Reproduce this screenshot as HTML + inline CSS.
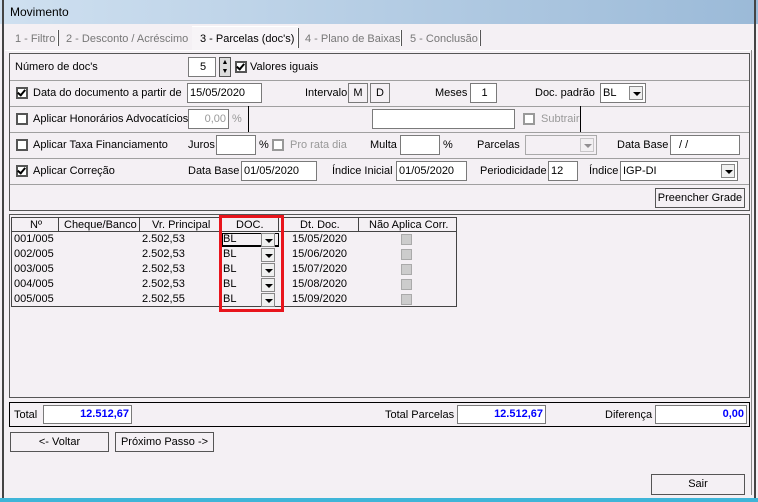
<!DOCTYPE html>
<html><head><meta charset="utf-8"><style>
*{box-sizing:border-box;margin:0;padding:0}
body{width:758px;height:502px;background:#f4f0f4;font-family:"Liberation Sans",sans-serif;font-size:11px;color:#000;position:relative;overflow:hidden}
.a{position:absolute;white-space:nowrap}
.t{position:absolute;white-space:nowrap;line-height:13px}
.in{position:absolute;background:#fff;border:1px solid #7a7a7a;height:20px;line-height:18px;padding-left:2px}
.cb{position:absolute;width:12px;height:12px;border:2px solid #555;background:#fff}
.cb.on::after{content:"";position:absolute;left:1px;top:-1px;width:3px;height:6px;border:solid #000;border-width:0 2px 2px 0;transform:rotate(40deg)}
.cb.dis{border-color:#999}
.hl{position:absolute;height:1px;background:#a0a0a0}
.btn{position:absolute;border:1px solid #555;background:#f4f0f4;text-align:center;line-height:18px}
.dd{position:absolute;width:14px;height:14px;border:1px solid #888;background:#f0f0f0}
.dd::after{content:"";position:absolute;left:3px;top:5px;border:4px solid transparent;border-top:4px solid #000;border-bottom:0}
.g{color:#999}
.gr{position:absolute;left:11px;width:446px;height:15px;line-height:15px}
.gr span{position:absolute}
.tot{position:absolute;background:#fff;border:1px solid #7a7a7a;height:19px;line-height:17px;text-align:right;padding-right:2px;color:#00f;font-weight:bold}
</style></head><body>
<div class="a" style="left:0;top:0;width:758px;height:24px;background:linear-gradient(90deg,#cfe0f0,#9bbad8)"></div>
<div class="a" style="left:2px;top:0;width:2px;height:502px;background:#444"></div>
<div class="a" style="left:754px;top:0;width:2px;height:502px;background:#444"></div>
<div class="a" style="left:0;top:498px;width:758px;height:4px;background:#3fb5d8"></div>
<div class="t" style="left:10px;top:6px;font-size:12px">Movimento</div>
<div class="t g" style="left:15px;top:33px;color:#777">1 - Filtro</div>
<div class="a" style="left:57px;top:30px;width:2px;height:16px;border-left:1px solid #fff;border-right:1px solid #555"></div>
<div class="t" style="left:66px;top:33px;color:#777">2 - Desconto / Acréscimo</div>
<div class="a" style="left:192px;top:26px;width:106px;height:24px;background:#f7f4f7;border-top:1px solid #fff"></div>
<div class="t" style="left:200px;top:33px">3 - Parcelas (doc's)</div>
<div class="a" style="left:297px;top:28px;width:2px;height:20px;border-left:1px solid #fff;border-right:1px solid #555"></div>
<div class="t" style="left:305px;top:33px;color:#777">4 - Plano de Baixas</div>
<div class="a" style="left:400px;top:30px;width:2px;height:16px;border-left:1px solid #fff;border-right:1px solid #555"></div>
<div class="t" style="left:410px;top:33px;color:#777">5 - Conclusão</div>
<div class="a" style="left:479px;top:30px;width:2px;height:16px;border-left:1px solid #fff;border-right:1px solid #555"></div>
<div class="a" style="left:5px;top:50px;width:748px;height:1px;background:#fff"></div>
<div class="a" style="left:751px;top:50px;width:2px;height:445px;border-left:1px solid #888"></div>

<div class="a" style="left:9px;top:53px;width:741px;height:158px;border:1px solid #555"></div>
<div class="hl" style="left:10px;top:80px;width:739px"></div>
<div class="hl" style="left:10px;top:106px;width:739px"></div>
<div class="hl" style="left:10px;top:132px;width:739px"></div>
<div class="hl" style="left:10px;top:158px;width:739px"></div>
<div class="hl" style="left:10px;top:184px;width:739px"></div>

<div class="t" style="left:15px;top:61px">Número de doc's</div>
<div class="in" style="left:188px;top:57px;width:28px;text-align:center">5</div>
<div class="a" style="left:219px;top:57px;width:12px;height:20px;border:1px solid #555;background:#ddd;font-size:7px;line-height:9px;text-align:center">▲<br>▼</div>
<div class="cb on" style="left:235px;top:61px"></div>
<div class="t" style="left:250px;top:61px">Valores iguais</div>

<div class="cb on" style="left:16px;top:87px"></div>
<div class="t" style="left:33px;top:87px">Data do documento a partir de</div>
<div class="in" style="left:187px;top:83px;width:75px">15/05/2020</div>
<div class="t" style="left:305px;top:87px">Intervalo</div>
<div class="in" style="left:348px;top:83px;width:20px;text-align:center;padding:0;background:#f4f0f4">M</div>
<div class="in" style="left:370px;top:83px;width:20px;text-align:center;padding:0;background:#f4f0f4">D</div>
<div class="t" style="left:435px;top:87px">Meses</div>
<div class="in" style="left:470px;top:83px;width:27px;text-align:center">1</div>
<div class="t" style="left:535px;top:87px">Doc. padrão</div>
<div class="in" style="left:600px;top:83px;width:46px">BL</div>
<div class="dd" style="left:629px;top:86px"></div>

<div class="cb" style="left:16px;top:113px"></div>
<div class="t" style="left:33px;top:113px">Aplicar Honorários Advocatícios</div>
<div class="in g" style="left:188px;top:109px;width:41px;text-align:right;padding-right:2px">0,00</div>
<div class="t g" style="left:232px;top:113px">%</div>
<div class="a" style="left:248px;top:106px;width:1px;height:26px;background:#000"></div>
<div class="in" style="left:372px;top:109px;width:143px"></div>
<div class="cb dis" style="left:523px;top:113px"></div>
<div class="t g" style="left:541px;top:113px">Subtrair</div>
<div class="a" style="left:580px;top:106px;width:1px;height:26px;background:#000"></div>

<div class="cb" style="left:16px;top:139px"></div>
<div class="t" style="left:33px;top:139px">Aplicar Taxa Financiamento</div>
<div class="t" style="left:188px;top:139px">Juros</div>
<div class="in" style="left:216px;top:135px;width:40px"></div>
<div class="t" style="left:259px;top:139px">%</div>
<div class="cb dis" style="left:272px;top:139px"></div>
<div class="t g" style="left:290px;top:139px">Pro rata dia</div>
<div class="t" style="left:370px;top:139px">Multa</div>
<div class="in" style="left:400px;top:135px;width:40px"></div>
<div class="t" style="left:443px;top:139px">%</div>
<div class="t" style="left:477px;top:139px">Parcelas</div>
<div class="in" style="left:525px;top:135px;width:72px;background:#f4f0f4;border-color:#aaa"></div>
<div class="dd" style="left:580px;top:138px;opacity:.4"></div>
<div class="t" style="left:617px;top:139px">Data Base</div>
<div class="in" style="left:670px;top:135px;width:70px;padding-left:8px">/ /</div>

<div class="cb on" style="left:16px;top:165px"></div>
<div class="t" style="left:33px;top:165px">Aplicar Correção</div>
<div class="t" style="left:188px;top:165px">Data Base</div>
<div class="in" style="left:241px;top:161px;width:76px">01/05/2020</div>
<div class="t" style="left:332px;top:165px">Índice Inicial</div>
<div class="in" style="left:396px;top:161px;width:71px">01/05/2020</div>
<div class="t" style="left:480px;top:165px">Periodicidade</div>
<div class="in" style="left:548px;top:161px;width:30px">12</div>
<div class="t" style="left:589px;top:165px">Índice</div>
<div class="in" style="left:620px;top:161px;width:118px">IGP-DI</div>
<div class="dd" style="left:721px;top:164px"></div>
<div class="btn" style="left:655px;top:188px;width:90px;height:20px">Preencher Grade</div>

<div class="a" style="left:9px;top:214px;width:741px;height:184px;border:1px solid #555"></div>
<div class="a" style="left:11px;top:217px;width:446px;height:90px;border:1px solid #444;background:#f4f0f4"></div>
<div class="a" style="left:12px;top:218px;width:444px;height:14px;border-bottom:1px solid #444;line-height:14px">
<span class="a" style="left:18px">Nº</span><span class="a" style="left:52px">Cheque/Banco</span><span class="a" style="left:140px">Vr. Principal</span><span class="a" style="left:224px">DOC.</span><span class="a" style="left:288px">Dt. Doc.</span><span class="a" style="left:357px">Não Aplica Corr.</span>
</div>
<div class="a" style="left:58px;top:218px;width:1px;height:14px;background:#444"></div>
<div class="a" style="left:139px;top:218px;width:1px;height:14px;background:#444"></div>
<div class="a" style="left:278px;top:218px;width:1px;height:14px;background:#444"></div>
<div class="a" style="left:358px;top:218px;width:1px;height:14px;background:#444"></div>
<div class="gr" style="top:232px"><span style="left:3px">001/005</span><span style="left:131px">2.502,53</span><span style="left:212px">BL</span><span style="left:281px">15/05/2020</span></div>
<div class="gr" style="top:247px"><span style="left:3px">002/005</span><span style="left:131px">2.502,53</span><span style="left:212px">BL</span><span style="left:281px">15/06/2020</span></div>
<div class="gr" style="top:262px"><span style="left:3px">003/005</span><span style="left:131px">2.502,53</span><span style="left:212px">BL</span><span style="left:281px">15/07/2020</span></div>
<div class="gr" style="top:277px"><span style="left:3px">004/005</span><span style="left:131px">2.502,53</span><span style="left:212px">BL</span><span style="left:281px">15/08/2020</span></div>
<div class="gr" style="top:292px"><span style="left:3px">005/005</span><span style="left:131px">2.502,55</span><span style="left:212px">BL</span><span style="left:281px">15/09/2020</span></div>
<div class="a" style="left:222px;top:233px;width:57px;height:14px;border:1px solid #000;border-bottom-width:2px"></div>
<div class="dd" style="left:261px;top:233px"></div>
<div class="dd" style="left:261px;top:248px"></div>
<div class="dd" style="left:261px;top:263px"></div>
<div class="dd" style="left:261px;top:278px"></div>
<div class="dd" style="left:261px;top:293px"></div>
<div class="a" style="left:401px;top:234px;width:11px;height:11px;background:#ccc;border:1px solid #aaa"></div>
<div class="a" style="left:401px;top:249px;width:11px;height:11px;background:#ccc;border:1px solid #aaa"></div>
<div class="a" style="left:401px;top:264px;width:11px;height:11px;background:#ccc;border:1px solid #aaa"></div>
<div class="a" style="left:401px;top:279px;width:11px;height:11px;background:#ccc;border:1px solid #aaa"></div>
<div class="a" style="left:401px;top:294px;width:11px;height:11px;background:#ccc;border:1px solid #aaa"></div>
<div class="a" style="left:219px;top:215px;width:65px;height:97px;border:3px solid #e8141c"></div>

<div class="a" style="left:9px;top:402px;width:741px;height:25px;border:1px solid #000"></div>
<div class="t" style="left:14px;top:409px">Total</div>
<div class="tot" style="left:43px;top:405px;width:89px">12.512,67</div>
<div class="t" style="left:385px;top:409px">Total Parcelas</div>
<div class="tot" style="left:457px;top:405px;width:89px">12.512,67</div>
<div class="t" style="left:605px;top:409px">Diferença</div>
<div class="tot" style="left:655px;top:405px;width:92px">0,00</div>

<div class="btn" style="left:10px;top:432px;width:99px;height:20px">&lt;- Voltar</div>
<div class="btn" style="left:115px;top:432px;width:99px;height:20px">Próximo Passo -&gt;</div>
<div class="btn" style="left:651px;top:474px;width:94px;height:21px">Sair</div>
</body></html>
